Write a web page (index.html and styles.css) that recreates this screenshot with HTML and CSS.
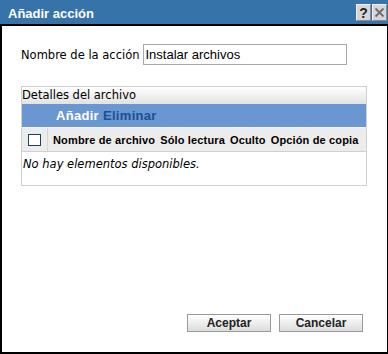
FILE: index.html
```html
<!DOCTYPE html>
<html lang="es">
<head>
    <meta charset="utf-8">
    <title>Añadir acción</title>
    <link rel="stylesheet" href="styles.css">
</head>
<body>
    <div class="dialogo">
        <div class="titulo">
            <span class="titulo_texto">Añadir acción</span>
            <span class="titulo_knap">?</span>
            <span class="titulo_knap">
                <svg width="11" height="11" viewBox="0 0 11 11"><path d="M1.5 1.5 L9.5 9.5 M9.5 1.5 L1.5 9.5" stroke="#6d6d6d" stroke-width="1.8"/></svg>
            </span>
        </div>
        <div class="indhold">
            <div class="navn_raekke">
                <label for="navn">Nombre de la acción</label>
                <input id="navn" type="text" value="Instalar archivos">
            </div>
            <section class="panel">
                <div class="panel_hoved">Detalles del archivo</div>
                <div class="vaerktoj">
                    <a class="tilfoej">Añadir</a>
                    <a class="fjern">Eliminar</a>
                </div>
                <div class="kolonner">
                    <div class="tjek_celle"><span class="tjekboks"></span></div>
                    <span>Nombre de archivo</span>
                    <span>Sólo lectura</span>
                    <span>Oculto</span>
                    <span>Opción de copia</span>
                </div>
                <p class="tom">No hay elementos disponibles.</p>
            </section>
        </div>
        <div class="knapper">
            <button>Aceptar</button>
            <button>Cancelar</button>
        </div>
    </div>
</body>
</html>
```

FILE: styles.css
```css
* {
    box-sizing: border-box;
}

body {
    margin: 0;
    font-family: 'DejaVu Sans', sans-serif;
    font-size: 11.5px;
    color: #000;
}

.dialogo {
    width: 388px;
    height: 354px;
    border: 2px solid #000;
    border-top: 0;
    border-right-width: 1px;
    display: flex;
    flex-direction: column;
    background: #fff;
}

/*Titel*/
.titulo {
    height: 26px;
    margin: 0 -1px 0 -2px;
    background-color: #3573a8;
    border-bottom: 2px solid #000;
    display: flex;
    align-items: flex-start;
    padding: 4px 1px 0 8px;
}

.titulo_texto {
    flex: 1;
    color: #fff;
    font-family: 'Liberation Sans', sans-serif;
    font-weight: bold;
    font-size: 13px;
    padding-top: 2px;
}

.titulo_knap {
    width: 15px;
    height: 17px;
    margin-left: 1px;
    background: #d6d6d6;
    border: 1px solid #f0f0f0;
    border-right-color: #8a8a8a;
    border-bottom-color: #8a8a8a;
    display: flex;
    align-items: center;
    justify-content: center;
    font-family: 'Liberation Sans', sans-serif;
    font-weight: bold;
    font-size: 14px;
    color: #222;
}

/*Indhold*/
.indhold {
    padding: 18px 19px 0 19px;
}

.navn_raekke {
    display: flex;
    align-items: center;
    gap: 3px;
}

.navn_raekke input {
    width: 204px;
    height: 21px;
    border: 1px solid #a8a8a8;
    padding: 0 2px;
    font-family: 'Liberation Sans', sans-serif;
    font-size: 13px;
    color: #000;
}

.panel {
    margin-top: 21px;
    border: 1px solid #d0d0d0;
    width: 346px;
}

.panel_hoved {
    height: 17px;
    background: linear-gradient(#ffffff, #e2e2e2);
    padding: 1px 0 0 0;
}

.vaerktoj {
    height: 23px;
    background-color: #6a97cf;
    display: flex;
    align-items: center;
    gap: 4px;
    padding-left: 34px;
    font-family: 'Liberation Sans', sans-serif;
    font-weight: bold;
    font-size: 13px;
    letter-spacing: 0.3px;
}

.tilfoej {
    color: #fff;
}

.fjern {
    color: #1c4f96;
}

.kolonner {
    height: 25px;
    background-color: #ececec;
    border-top: 1px solid #f7f7f7;
    border-bottom: 1px solid #d0d0d0;
    display: flex;
    align-items: center;
    gap: 5px;
    font-family: 'Liberation Sans', sans-serif;
    font-weight: bold;
    font-size: 11px;
    letter-spacing: 0.15px;
}

.tjek_celle {
    width: 26px;
    height: 100%;
    border-right: 1px solid #d6d6d6;
    display: flex;
    align-items: center;
    justify-content: center;
}

.tjekboks {
    width: 13px;
    height: 12px;
    background: #fff;
    border: 1px solid #1f3d66;
}

.tom {
    margin: 0;
    height: 33px;
    padding: 5px 0 0 1px;
    font-style: italic;
}

/*Knapper*/
.knapper {
    margin-top: auto;
    display: flex;
    justify-content: flex-end;
    gap: 8px;
    padding: 0 24px 20px 0;
}

.knapper button {
    width: 84px;
    height: 18px;
    border: 1px solid #9a9a9a;
    background: linear-gradient(#ffffff, #dcdcdc);
    font-family: 'Liberation Sans', sans-serif;
    font-weight: bold;
    font-size: 12px;
    color: #222;
    padding: 0;
}
```
